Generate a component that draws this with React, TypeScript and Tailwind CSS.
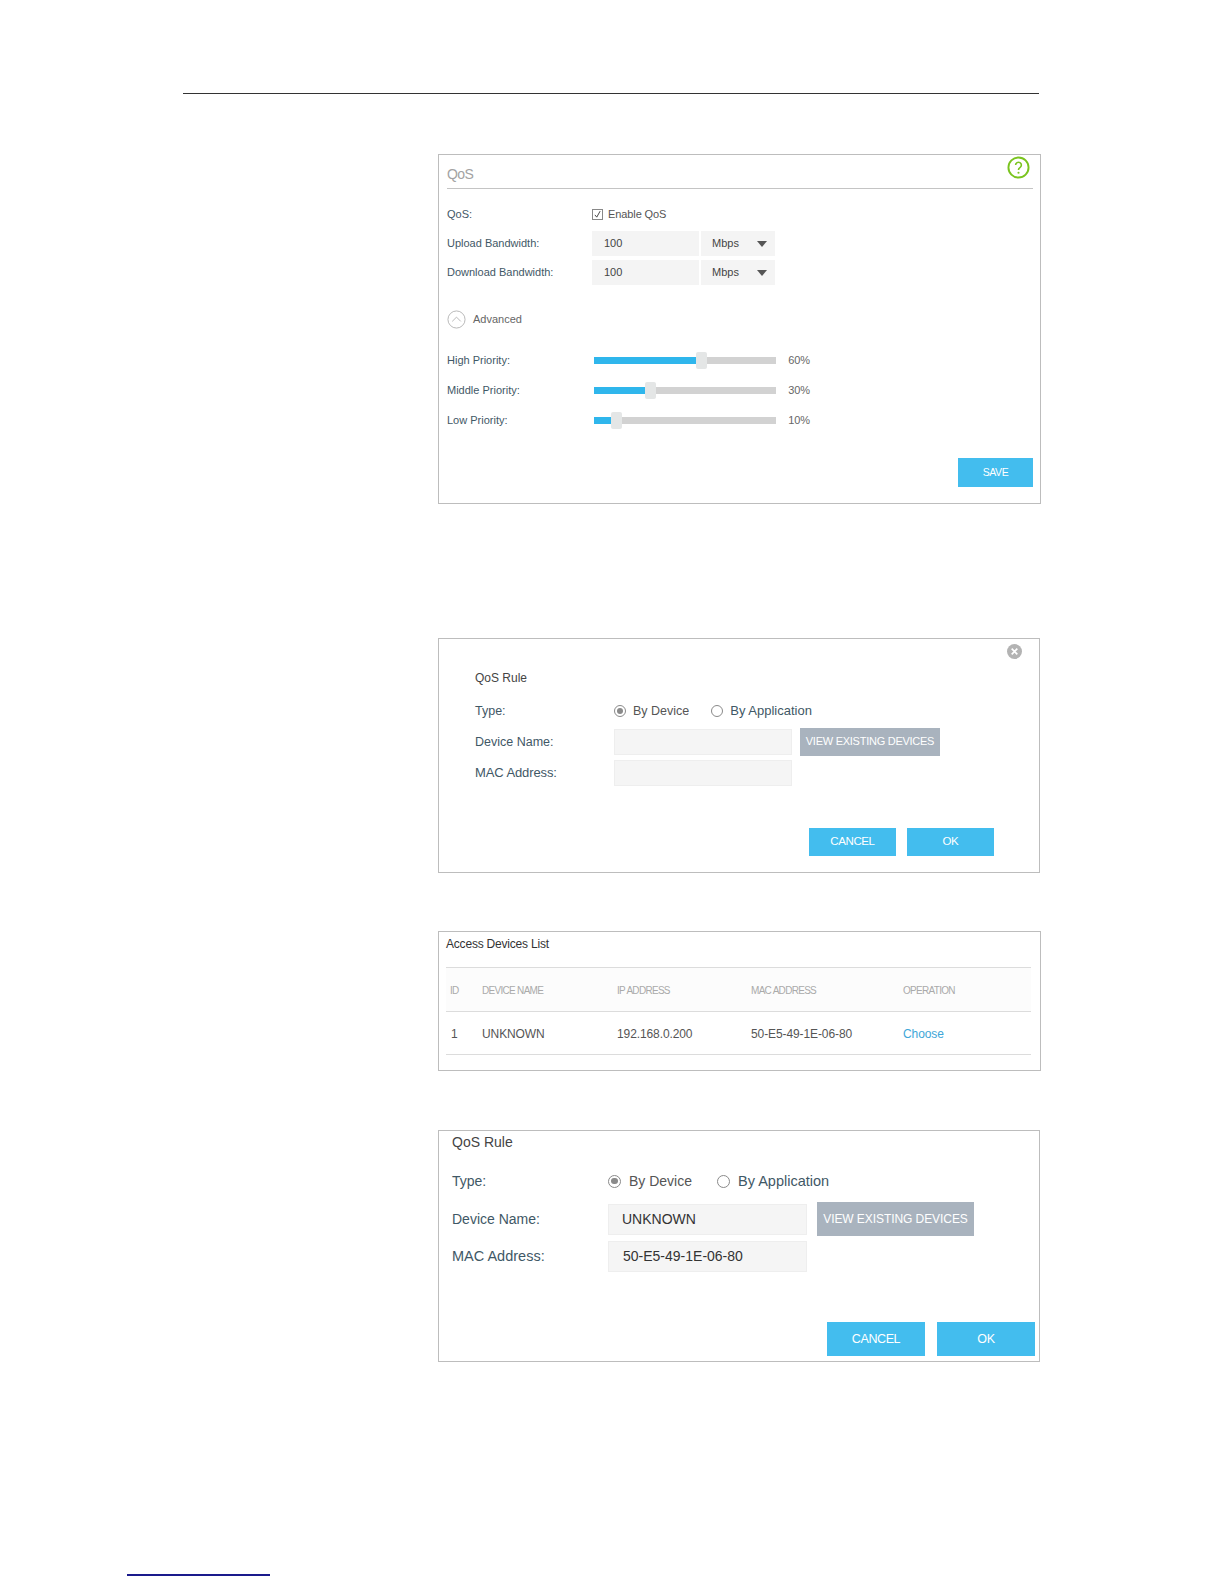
import { ReactNode } from 'react';

const labelColor = 'text-[#3f5866]';

function Panel({ className, children }: { className: string; children: ReactNode }) {
  return <div className={`ml-[438px] border border-[#bdbdbd] bg-white ${className}`}>{children}</div>;
}

function Caret() {
  return <span className="ml-auto h-0 w-0 border-x-[5px] border-t-[6px] border-x-transparent border-t-[#555]" />;
}

function Bandwidth({ label, last }: { label: string; last?: boolean }) {
  return (
    <div className={`flex h-[25px] items-center ${last ? '' : 'mb-[4px]'}`}>
      <span className={`w-[145px] text-[11px] ${labelColor}`}>{label}</span>
      <div className="flex h-[25px] w-[107px] items-center bg-[#f4f4f4] pl-[12px] text-[11px] text-[#444]">100</div>
      <div className="ml-[2px] flex h-[25px] w-[74px] items-center bg-[#f4f4f4] pl-[11px] pr-[8px] text-[11px] text-[#444]">
        Mbps
        <Caret />
      </div>
    </div>
  );
}

function Slider({ label, value, fill, thumb }: { label: string; value: string; fill: string; thumb: string }) {
  return (
    <div className="mb-[12px] flex h-[18px] items-center">
      <span className={`w-[147px] text-[11px] ${labelColor}`}>{label}</span>
      <div className="relative h-[7px] w-[182px] bg-[#d2d2d2]">
        <div className={`h-full bg-[#2fb6ec] ${fill}`} />
        <div className={`absolute top-[-5px] h-[17px] w-[11px] rounded-[2px] bg-[#e4e6e6] ${thumb}`} />
      </div>
      <span className="ml-[10px] w-[24px] text-right text-[11px] tracking-[-0.1px] text-[#666]">{value}</span>
    </div>
  );
}

function Radio({ checked, size }: { checked?: boolean; size: string }) {
  return (
    <span className={`flex items-center justify-center rounded-full border border-[#8a8a8a] ${size}`}>
      {checked && <span className="h-[60%] w-[60%] rounded-full bg-[#8a8a8a]" />}
    </span>
  );
}

function BlueButton({ className, children }: { className: string; children: ReactNode }) {
  return <div className={`flex items-center justify-center bg-[#43bdee] tracking-[-0.4px] text-white ${className}`}>{children}</div>;
}

export default function App() {
  return (
    <div className="h-[1584px] w-[1224px] overflow-hidden bg-white pt-[93px] font-['Liberation_Sans',sans-serif]">
      <div className="ml-[183px] h-px w-[856px] bg-[#333]" />

      {/* QoS settings */}
      <Panel className="relative mt-[60px] h-[350px] w-[603px] pl-[8px] pr-[7px]">
        <div className="flex h-[34px] items-end border-b border-[#c4c4c4] pb-[3px] text-[14px] font-light tracking-[-0.6px] text-[#a3a3a3]">QoS</div>
        <svg className="absolute right-[10px] top-[1px] h-[23px] w-[23px]" viewBox="0 0 24 24" fill="none">
          <circle cx="12" cy="12" r="10.5" stroke="#7ac41f" strokeWidth="2" />
          <path d="M9 9.5a3 3 0 1 1 4.5 2.6c-1 .6-1.5 1.2-1.5 2.4" stroke="#7ac41f" strokeWidth="1.7" />
          <circle cx="12" cy="17.5" r="1.1" fill="#7ac41f" />
        </svg>
        <div className="mt-[16px] flex h-[18px] items-center">
          <span className={`w-[145px] text-[11px] ${labelColor}`}>QoS:</span>
          <span className="flex h-[11px] w-[11px] items-center justify-center border border-[#888]">
            <svg viewBox="0 0 12 12" className="h-[11px] w-[11px]" fill="none">
              <path d="M2.5 6.5l2.5 3 4.5-8" stroke="#444" strokeWidth="1.3" />
            </svg>
          </span>
          <span className="ml-[5px] text-[11px] tracking-[-0.1px] text-[#555]">Enable QoS</span>
        </div>
        <div className="mt-[8px]">
          <Bandwidth label="Upload Bandwidth:" />
          <Bandwidth label="Download Bandwidth:" last />
        </div>
        <div className="mt-[24px] flex h-[20px] items-center">
          <svg className="h-[19px] w-[19px]" viewBox="0 0 20 20" fill="none">
            <circle cx="10" cy="10" r="9" stroke="#b5b5b5" />
            <path d="M5.5 12l4.5-4.5 4.5 4.5" stroke="#b5b5b5" />
          </svg>
          <span className="ml-[7px] text-[11px] text-[#666]">Advanced</span>
        </div>
        <div className="mt-[22px]">
          <Slider label="High Priority:" value="60%" fill="w-[57%]" thumb="left-[102px]" />
          <Slider label="Middle Priority:" value="30%" fill="w-[29%]" thumb="left-[51px]" />
          <Slider label="Low Priority:" value="10%" fill="w-[10%]" thumb="left-[17px]" />
        </div>
        <div className="mt-[29px] flex justify-end">
          <BlueButton className="h-[29px] w-[75px] text-[10.5px]">SAVE</BlueButton>
        </div>
      </Panel>

      {/* QoS rule, empty */}
      <Panel className="relative mt-[134px] h-[235px] w-[602px] pl-[36px]">
        <svg className="absolute right-[17px] top-[5px] h-[15px] w-[15px]" viewBox="0 0 16 16">
          <circle cx="8" cy="8" r="8" fill="#b3b3b3" />
          <path d="M5 5l6 6M11 5l-6 6" stroke="#fff" strokeWidth="1.8" />
        </svg>
        <div className="pt-[31px] text-[12px] leading-[16px] text-[#444]">QoS Rule</div>
        <div className="mt-[16px] flex h-[18px] items-center">
          <span className={`w-[139px] text-[12.5px] ${labelColor}`}>Type:</span>
          <Radio checked size="h-[12px] w-[12px]" />
          <span className="ml-[7px] text-[12.5px] text-[#555]">By Device</span>
          <span className="ml-[22px]"><Radio size="h-[12px] w-[12px]" /></span>
          <span className={`ml-[7px] text-[13px] ${labelColor}`}>By Application</span>
        </div>
        <div className="mt-[5px] flex h-[33px] items-center">
          <span className={`w-[139px] pt-[1px] text-[12.5px] ${labelColor}`}>Device Name:</span>
          <div className="h-[26px] w-[178px] border border-[#eeeeee] bg-[#f5f5f5]" />
          <div className="ml-[8px] flex h-[28px] w-[140px] items-center justify-center bg-[#a9b3be] text-[11px] tracking-[-0.26px] text-white">VIEW EXISTING DEVICES</div>
        </div>
        <div className="flex h-[30px] items-center">
          <span className={`w-[139px] text-[13px] tracking-[-0.1px] ${labelColor}`}>MAC Address:</span>
          <div className="h-[26px] w-[178px] border border-[#eeeeee] bg-[#f5f5f5]" />
        </div>
        <div className="mt-[40px] flex gap-[11px] pl-[334px]">
          <BlueButton className="h-[28px] w-[87px] text-[11.5px]">CANCEL</BlueButton>
          <BlueButton className="h-[28px] w-[87px] text-[11.5px]">OK</BlueButton>
        </div>
      </Panel>

      {/* Access devices list */}
      <Panel className="mt-[58px] h-[140px] w-[603px] pl-[7px] pr-[9px]">
        <div className="pt-[4px] text-[12px] leading-[16px] tracking-[-0.2px] text-[#333]">Access Devices List</div>
        <div className="mt-[15px] flex h-[45px] items-center border-y border-[#dcdcdc] bg-[#fcfcfc] pt-[1px] text-[10px] font-light tracking-[-0.7px] text-[#aaa]">
          <span className="w-[36px] pl-[4px]">ID</span>
          <span className="w-[135px]">DEVICE NAME</span>
          <span className="w-[134px]">IP ADDRESS</span>
          <span className="w-[152px]">MAC ADDRESS</span>
          <span>OPERATION</span>
        </div>
        <div className="flex h-[43px] items-center border-b border-[#dcdcdc] pt-[1px] text-[12px] tracking-[-0.1px] text-[#555]">
          <span className="w-[36px] pl-[5px]">1</span>
          <span className="w-[135px]">UNKNOWN</span>
          <span className="w-[134px]">192.168.0.200</span>
          <span className="w-[152px]">50-E5-49-1E-06-80</span>
          <span className="text-[#3ea6d8]">Choose</span>
        </div>
      </Panel>

      {/* QoS rule, filled in */}
      <Panel className="mt-[59px] h-[232px] w-[602px] pl-[13px]">
        <div className="pt-[3px] text-[14px] leading-[16px] text-[#444]">QoS Rule</div>
        <div className="mt-[22px] flex h-[18px] items-center">
          <span className={`w-[156px] text-[14px] ${labelColor}`}>Type:</span>
          <Radio checked size="h-[13px] w-[13px]" />
          <span className="ml-[8px] text-[14px] text-[#555]">By Device</span>
          <span className="ml-[25px]"><Radio size="h-[13px] w-[13px]" /></span>
          <span className={`ml-[8px] pt-[1px] text-[14.5px] ${labelColor}`}>By Application</span>
        </div>
        <div className="mt-[12px] flex h-[34px] items-center">
          <span className={`w-[156px] text-[14px] ${labelColor}`}>Device Name:</span>
          <div className="flex h-[31px] w-[199px] items-center border border-[#eeeeee] bg-[#f5f5f5] pl-[13px] text-[14px] text-[#333]">UNKNOWN</div>
          <div className="ml-[10px] flex h-[34px] w-[157px] items-center justify-center bg-[#a9b3be] text-[12px] tracking-[-0.07px] text-white">VIEW EXISTING DEVICES</div>
        </div>
        <div className="mt-[5px] flex h-[31px] items-center">
          <span className={`w-[156px] text-[14.5px] ${labelColor}`}>MAC Address:</span>
          <div className="flex h-[31px] w-[199px] items-center border border-[#eeeeee] bg-[#f5f5f5] pl-[14px] text-[14px] text-[#333]">50-E5-49-1E-06-80</div>
        </div>
        <div className="mt-[50px] flex gap-[12px] pl-[375px]">
          <BlueButton className="h-[34px] w-[98px] text-[12.5px]">CANCEL</BlueButton>
          <BlueButton className="h-[34px] w-[98px] text-[12.5px]">OK</BlueButton>
        </div>
      </Panel>

      <div className="ml-[127px] mt-[212px] h-[2px] w-[143px] bg-[#1a1a8c]" />
    </div>
  );
}
